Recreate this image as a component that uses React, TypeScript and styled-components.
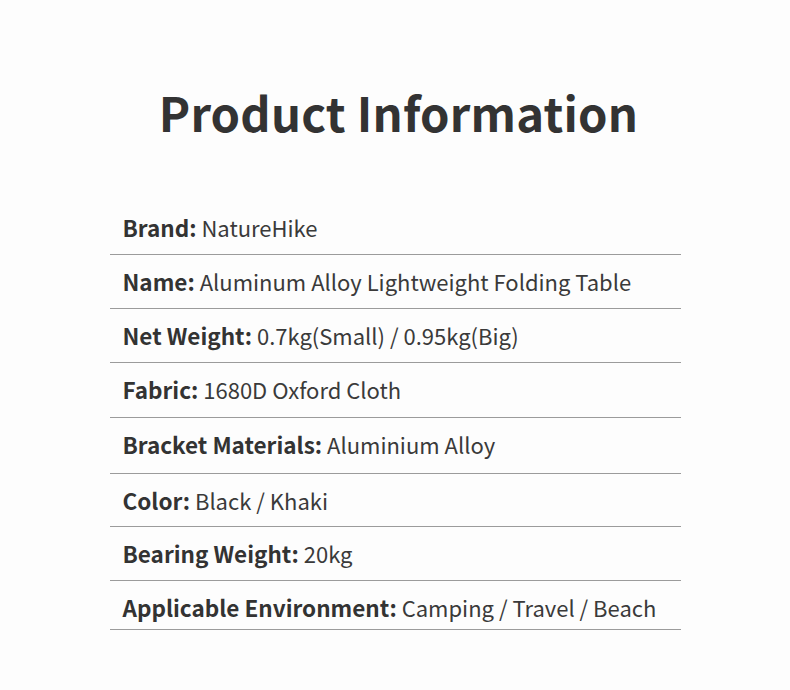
import styled, { createGlobalStyle } from "styled-components";

// row heights follow the ruled lines of the original sheet
const SPECS = [
  { label: "Brand", value: "NatureHike", height: 54 },
  { label: "Name", value: "Aluminum Alloy Lightweight Folding Table", height: 54 },
  { label: "Net Weight", value: "0.7kg(Small) / 0.95kg(Big)", height: 54 },
  { label: "Fabric", value: "1680D Oxford Cloth", height: 55 },
  { label: "Bracket Materials", value: "Aluminium Alloy", height: 56 },
  { label: "Color", value: "Black / Khaki", height: 53 },
  { label: "Bearing Weight", value: "20kg", height: 54 },
  { label: "Applicable Environment", value: "Camping / Travel / Beach", height: 49 },
];

const GlobalStyle = createGlobalStyle`
  html, body {
    margin: 0;
    padding: 0;
    background: #fdfdfd;
  }
  body {
    font-family: "Noto Sans CJK SC", "Source Sans Pro", "Noto Sans", sans-serif;
    color: #333;
  }
`;

const Page = styled.div`
  width: 790px;
  height: 690px;
  padding-top: 84px;
  box-sizing: border-box;
  display: flex;
  flex-direction: column;
  align-items: center;
`;

const Title = styled.h1`
  margin: 0;
  padding-left: 7px;
  font-size: 47.2px;
  font-weight: 700;
  line-height: 56px;
  color: #333;
  letter-spacing: 0.2px;
`;

const SpecList = styled.div`
  margin-top: 61px;
  width: 571px;
  display: flex;
  flex-direction: column;
`;

const SpecRow = styled.div<{ rowHeight: number }>`
  height: ${({ rowHeight }) => rowHeight}px;
  box-sizing: border-box;
  border-bottom: 1px solid #9b9b9b;
  padding: 12px 0 0 13px;
  display: flex;
  align-items: flex-start;
  font-size: 22px;
  line-height: 28px;
  white-space: nowrap;
`;

const Label = styled.span`
  font-size: 22.5px;
  font-weight: 700;
  color: #333;
`;

const Value = styled.span`
  font-weight: 400;
  color: #3a3a3a;
`;

export default function App(): JSX.Element {
  return (
    <Page>
      <GlobalStyle />
      <Title>Product Information</Title>
      <SpecList>
        {SPECS.map(spec => (
          <SpecRow key={spec.label} rowHeight={spec.height}>
            <Label>{spec.label}:</Label>
            <Value>&nbsp;{spec.value}</Value>
          </SpecRow>
        ))}
      </SpecList>
    </Page>
  );
}
